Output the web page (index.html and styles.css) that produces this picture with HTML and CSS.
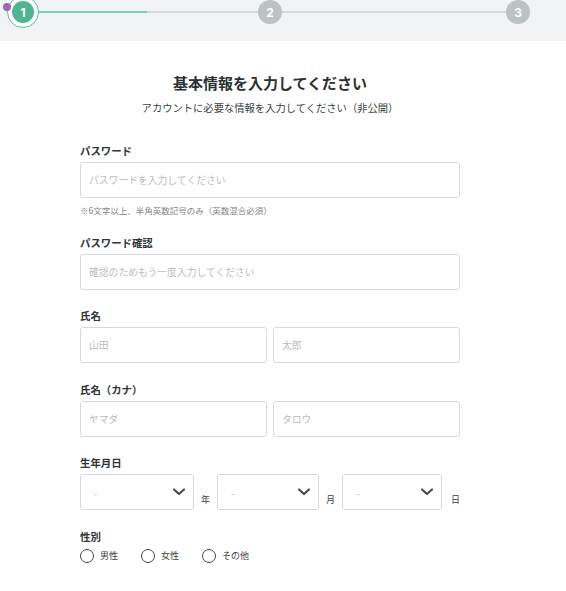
FILE: index.html
```html
<!DOCTYPE html>
<html lang="ja">
<head>
<meta charset="utf-8">
<title>基本情報</title>
<link rel="stylesheet" href="styles.css">
</head>
<body>
<div class="stepper">
  <div class="step-current">
    <span class="dot"></span>
    <span class="num">1</span>
  </div>
  <div class="line line-1"></div>
  <div class="step">2</div>
  <div class="line line-2"></div>
  <div class="step">3</div>
</div>

<main class="form">
  <h1 class="title">基本情報を入力してください</h1>
  <p class="lead">アカウントに必要な情報を入力してください（非公開）</p>

  <div class="field">
    <div class="label">パスワード</div>
    <input class="input" type="text" placeholder="パスワードを入力してください">
    <div class="note">※6文字以上、半角英数記号のみ（英数混合必須）</div>
  </div>

  <div class="field">
    <div class="label">パスワード確認</div>
    <input class="input" type="text" placeholder="確認のためもう一度入力してください">
  </div>

  <div class="field">
    <div class="label">氏名</div>
    <div class="pair">
      <input class="input" type="text" placeholder="山田">
      <input class="input" type="text" placeholder="太郎">
    </div>
  </div>

  <div class="field">
    <div class="label">氏名（カナ）</div>
    <div class="pair">
      <input class="input" type="text" placeholder="ヤマダ">
      <input class="input" type="text" placeholder="タロウ">
    </div>
  </div>

  <div class="field">
    <div class="label">生年月日</div>
    <div class="dates">
      <div class="select sel-year"><span class="sel-val">-</span><svg class="chev" width="12" height="8" viewBox="0 0 12 8"><polyline points="1,1.5 6,6 11,1.5" fill="none" stroke="#4a4f53" stroke-width="2.2" stroke-linecap="round" stroke-linejoin="round"/></svg></div>
      <span class="unit">年</span>
      <div class="select sel-month"><span class="sel-val">-</span><svg class="chev" width="12" height="8" viewBox="0 0 12 8"><polyline points="1,1.5 6,6 11,1.5" fill="none" stroke="#4a4f53" stroke-width="2.2" stroke-linecap="round" stroke-linejoin="round"/></svg></div>
      <span class="unit">月</span>
      <div class="select sel-day"><span class="sel-val">-</span><svg class="chev" width="12" height="8" viewBox="0 0 12 8"><polyline points="1,1.5 6,6 11,1.5" fill="none" stroke="#4a4f53" stroke-width="2.2" stroke-linecap="round" stroke-linejoin="round"/></svg></div>
      <span class="unit">日</span>
    </div>
  </div>

  <div class="field">
    <div class="label">性別</div>
    <div class="radios">
      <label class="radio"><span class="circle"></span>男性</label>
      <label class="radio"><span class="circle"></span>女性</label>
      <label class="radio"><span class="circle"></span>その他</label>
    </div>
  </div>
</main>
</body>
</html>
```

FILE: styles.css
```css
html, body {
  margin: 0;
  padding: 0;
  background: #ffffff;
}

body {
  font-family: "Noto Sans CJK JP", "Noto Sans", sans-serif;
  color: #2f3437;
}

/* ---------- stepper ---------- */
.stepper {
  height: 41px;
  background: #f2f3f5;
  display: flex;
  align-items: flex-start;
  padding-left: 7px;
  box-sizing: border-box;
}

.step-current {
  position: relative;
  flex: none;
  width: 32px;
  height: 32px;
  margin-top: -4px;
  box-sizing: border-box;
  border: 1.5px solid #5cbf9e;
  border-radius: 50%;
  background: #ffffff;
  display: flex;
  align-items: center;
  justify-content: center;
}

.step-current .num {
  width: 22px;
  height: 22px;
  border-radius: 50%;
  background: #4fb594;
  color: #ffffff;
  font-family: Inter, "Noto Sans", sans-serif;
  font-weight: 700;
  font-size: 12px;
  display: flex;
  align-items: center;
  justify-content: center;
}

.step-current .dot {
  position: absolute;
  left: -5.5px;
  top: 5.5px;
  width: 8px;
  height: 8px;
  border-radius: 50%;
  background: #a062c0;
}

.line {
  flex: none;
  height: 1.5px;
  margin-top: 11px;
}

.line-1 {
  width: 219px;
  background: linear-gradient(to right, #7ccdb1 0, #7ccdb1 108px, #d6d9dc 108px);
}

.line-2 {
  width: 224px;
  background: #d6d9dc;
}

.step {
  flex: none;
  width: 24px;
  height: 24px;
  border-radius: 50%;
  background: #bdc2c5;
  color: #ffffff;
  font-family: Inter, "Noto Sans", sans-serif;
  font-weight: 700;
  font-size: 12px;
  display: flex;
  align-items: center;
  justify-content: center;
}

/* ---------- form ---------- */
.form {
  width: 380px;
  margin-left: 80px;
  padding-top: 32px;
}

.title {
  margin: 0;
  text-align: center;
  font-size: 15px;
  line-height: 20px;
  font-weight: 700;
  color: #2b3033;
}

.lead {
  margin: 7px 0 0;
  text-align: center;
  font-size: 10.3px;
  line-height: 16px;
  color: #3a3f42;
}

.field {
  margin-top: 19.6px;
}

.lead + .field {
  margin-top: 28px;
}

.label {
  font-size: 10.4px;
  line-height: 14px;
  font-weight: 700;
  color: #2f3437;
  margin-bottom: 4px;
}

.input {
  display: block;
  width: 100%;
  height: 36px;
  box-sizing: border-box;
  margin: 0;
  border: 1px solid #d6d9dc;
  border-radius: 3px;
  padding: 0 8px;
  font-family: "Noto Sans CJK JP", "Noto Sans", sans-serif;
  font-size: 9.8px;
  color: #333;
  background: #fff;
  outline: none;
}

.input::placeholder {
  color: #b9bcbf;
}

.note {
  margin-top: 6px;
  font-size: 8.5px;
  line-height: 12px;
  color: #80868a;
}

.pair {
  display: flex;
  gap: 6px;
}

.pair .input {
  flex: 1;
  min-width: 0;
}

.dates {
  display: flex;
  align-items: flex-end;
}

.select {
  flex: none;
  height: 36px;
  box-sizing: border-box;
  border: 1px solid #d6d9dc;
  border-radius: 3px;
  display: flex;
  align-items: center;
  justify-content: space-between;
  padding: 0 8px 0 13px;
  background: #fff;
}

.sel-year { width: 114px; }
.sel-month { width: 102px; }
.sel-day { width: 100px; }

.sel-val {
  font-size: 10px;
  color: #b9bcbf;
}

.chev {
  display: block;
}

.unit {
  flex: none;
  width: 9px;
  margin: 0 7px 4px;
  font-size: 9px;
  line-height: 12px;
  color: #3a3f42;
}

.unit:last-child {
  margin-right: 0;
  margin-left: 9px;
}

.radios {
  display: flex;
  gap: 23px;
  padding-top: 1px;
}

.radio {
  display: flex;
  align-items: center;
  gap: 6px;
  font-size: 9px;
  line-height: 14px;
  color: #3a3f42;
}

.circle {
  width: 14px;
  height: 14px;
  box-sizing: border-box;
  border: 1.5px solid #3f4447;
  border-radius: 50%;
}
```
